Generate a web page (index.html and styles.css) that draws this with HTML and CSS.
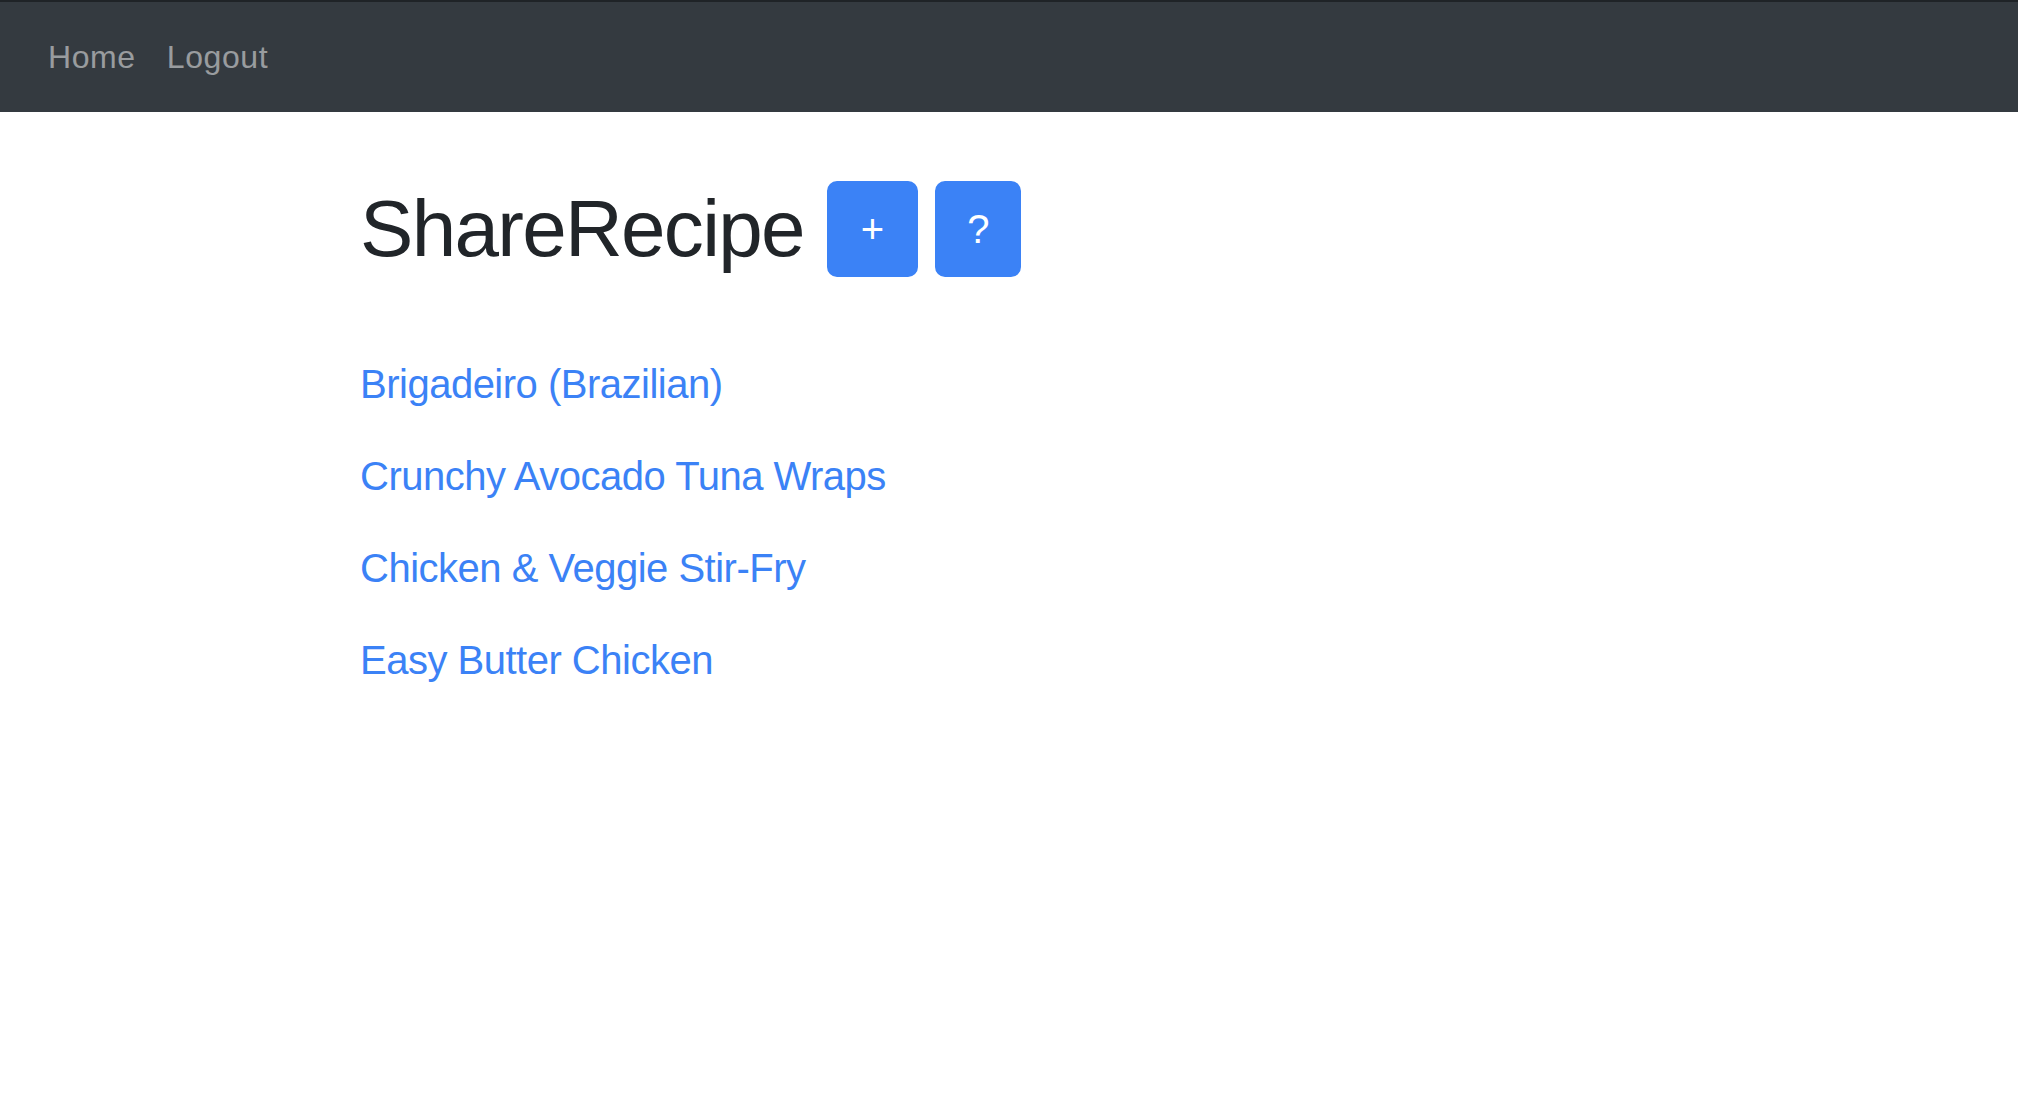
FILE: index.html
```html
<!DOCTYPE html>
<html lang="en">
<head>
<meta charset="utf-8">
<title>ShareRecipe</title>
<link rel="stylesheet" href="styles.css">
</head>
<body>
<nav class="navbar">
  <a class="nav-link" href="#">Home</a>
  <a class="nav-link" href="#">Logout</a>
</nav>
<main class="content">
  <div class="title-row">
    <h1 class="title">ShareRecipe</h1>
    <a class="btn" href="#">+</a>
    <a class="btn btn-help" href="#">?</a>
  </div>
  <ul class="recipes">
    <li><a href="#">Brigadeiro (Brazilian)</a></li>
    <li><a href="#">Crunchy Avocado Tuna Wraps</a></li>
    <li><a href="#">Chicken &amp; Veggie Stir-Fry</a></li>
    <li><a href="#">Easy Butter Chicken</a></li>
  </ul>
</main>
</body>
</html>
```
FILE: styles.css
```css
* { box-sizing: border-box; }
html, body { margin: 0; padding: 0; }
body {
  font-family: "Liberation Sans", Arial, sans-serif;
  background: #fff;
  color: #212529;
}
.navbar {
  display: flex;
  height: 112px;
  padding: 15px 32px 15px;
  background: #343a40;
  border-top: 2px solid #1f2327;
}
.nav-link {
  display: block;
  padding: 16px;
  font-size: 32px;
  line-height: 48px;
  letter-spacing: 0.6px;
  color: rgba(255, 255, 255, 0.5);
  text-decoration: none;
}
.nav-link + .nav-link {
  margin-left: -1px;
}
.content {
  padding: 69px 0 0 360px;
}
.title-row {
  display: flex;
  align-items: center;
}
.title {
  margin: 0 23px 0 0;
  font-size: 80px;
  line-height: 96px;
  font-weight: 400;
  letter-spacing: -1.7px;
  color: #212529;
}
.btn {
  display: block;
  padding: 16px 32px;
  border: 2px solid #3b82f6;
  border-radius: 10px;
  background: #3b82f6;
  color: #fff;
  font-size: 40px;
  line-height: 60px;
  text-decoration: none;
}
.btn-help {
  margin-left: 17px;
  padding: 16px 30px;
}
.recipes {
  list-style: none;
  margin: 83px 0 0;
  padding: 0;
}
.recipes li {
  height: 92px;
}
.recipes a {
  font-size: 40px;
  line-height: 48px;
  letter-spacing: -0.5px;
  color: #3b82f6;
  text-decoration: none;
}
```
